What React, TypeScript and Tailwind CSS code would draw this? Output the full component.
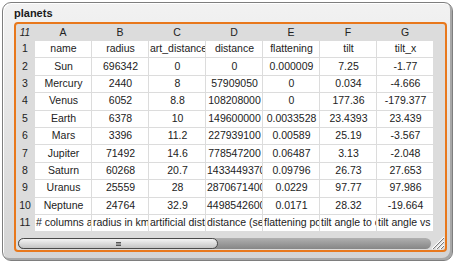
import React from "react";

type Row = string[];

const rows: Row[] = [
  ["name", "radius", "art_distance", "distance", "flattening", "tilt", "tilt_x"],
  ["Sun", "696342", "0", "0", "0.000009", "7.25", "-1.77"],
  ["Mercury", "2440", "8", "57909050", "0", "0.034", "-4.666"],
  ["Venus", "6052", "8.8", "108208000", "0", "177.36", "-179.377"],
  ["Earth", "6378", "10", "149600000", "0.0033528", "23.4393", "23.439"],
  ["Mars", "3396", "11.2", "227939100", "0.00589", "25.19", "-3.567"],
  ["Jupiter", "71492", "14.6", "778547200", "0.06487", "3.13", "-2.048"],
  ["Saturn", "60268", "20.7", "1433449370", "0.09796", "26.73", "27.653"],
  ["Uranus", "25559", "28", "2870671400", "0.0229", "97.77", "97.986"],
  ["Neptune", "24764", "32.9", "4498542600", "0.0171", "28.32", "-19.664"],
  [
    "# columns are name",
    "radius in km",
    "artificial distance",
    "distance (semi-major axis) in km",
    "flattening polar",
    "tilt angle to orbit",
    "tilt angle vs ecliptic",
  ],
];

const letters = ["A", "B", "C", "D", "E", "F", "G"];

function Cell({ text }: { text: string }) {
  return (
    <div className="w-[56px] h-full bg-white flex items-center justify-center-safe overflow-hidden whitespace-nowrap pl-[1px]">
      {text}
    </div>
  );
}

export default function App() {
  return (
    <div
      className="w-[455px] h-[263px] bg-white pt-[2px] pl-[2px]"
      style={{ fontFamily: '"Liberation Sans", Arial, sans-serif' }}
    >
      <div className="w-[451px] h-[259px] rounded-[9px] border border-[#7e7e7e] bg-gradient-to-b from-[#f2f2f2] to-[#d4d4d4] shadow-[inset_-2px_-2px_0_#a8a8a8,inset_1px_1px_0_#ffffff] flex flex-col pl-[11px] pr-[5px]">
        <div className="h-[19px] flex items-center text-[11px] font-bold text-[#1a1a1a] leading-none pt-[1px]">
          planets
        </div>
        <div className="h-[230px] rounded-[4px] border-2 border-[#e8781c] bg-[#dcdcdc] flex flex-col relative overflow-hidden text-[10.5px] text-[#222]">
          <div className="h-[17px] flex gap-px">
            <div className="w-[18px] flex items-center justify-center italic text-[10px]">11</div>
            {letters.map((l) => (
              <div key={l} className="w-[56px] flex items-center justify-center">
                {l}
              </div>
            ))}
          </div>
          <div className="flex flex-col gap-px">
            {rows.map((r, i) => (
              <div key={i} className="h-[16.4px] flex gap-px">
                <div className="w-[18px] flex items-center justify-center">{i + 1}</div>
                {r.map((t, j) => (
                  <Cell key={j} text={t} />
                ))}
              </div>
            ))}
          </div>
          <div className="flex-1" />
          <div className="h-[11px] mb-[1px] ml-[2px] mr-[14px] rounded-full bg-gradient-to-b from-[#b0b0b0] to-[#868686] flex">
            <div className="w-[200px] h-full rounded-full border border-[#4a4a4a] bg-gradient-to-b from-[#f4f4f4] to-[#c4c4c4] flex items-center justify-center">
              <div className="w-[5px] h-[4px] border-t border-b border-[#555] bg-[#999]" />
            </div>
          </div>
          <svg className="absolute right-0 bottom-0" width="15" height="15" viewBox="0 0 15 15">
            <path d="M14 2 L2 14 M14 6 L6 14 M14 10 L10 14" stroke="#ffffff" strokeWidth="1.2" />
            <path d="M14 3 L3 14 M14 7 L7 14 M14 11 L11 14" stroke="#7a7a7a" strokeWidth="1" />
          </svg>
        </div>
      </div>
    </div>
  );
}
